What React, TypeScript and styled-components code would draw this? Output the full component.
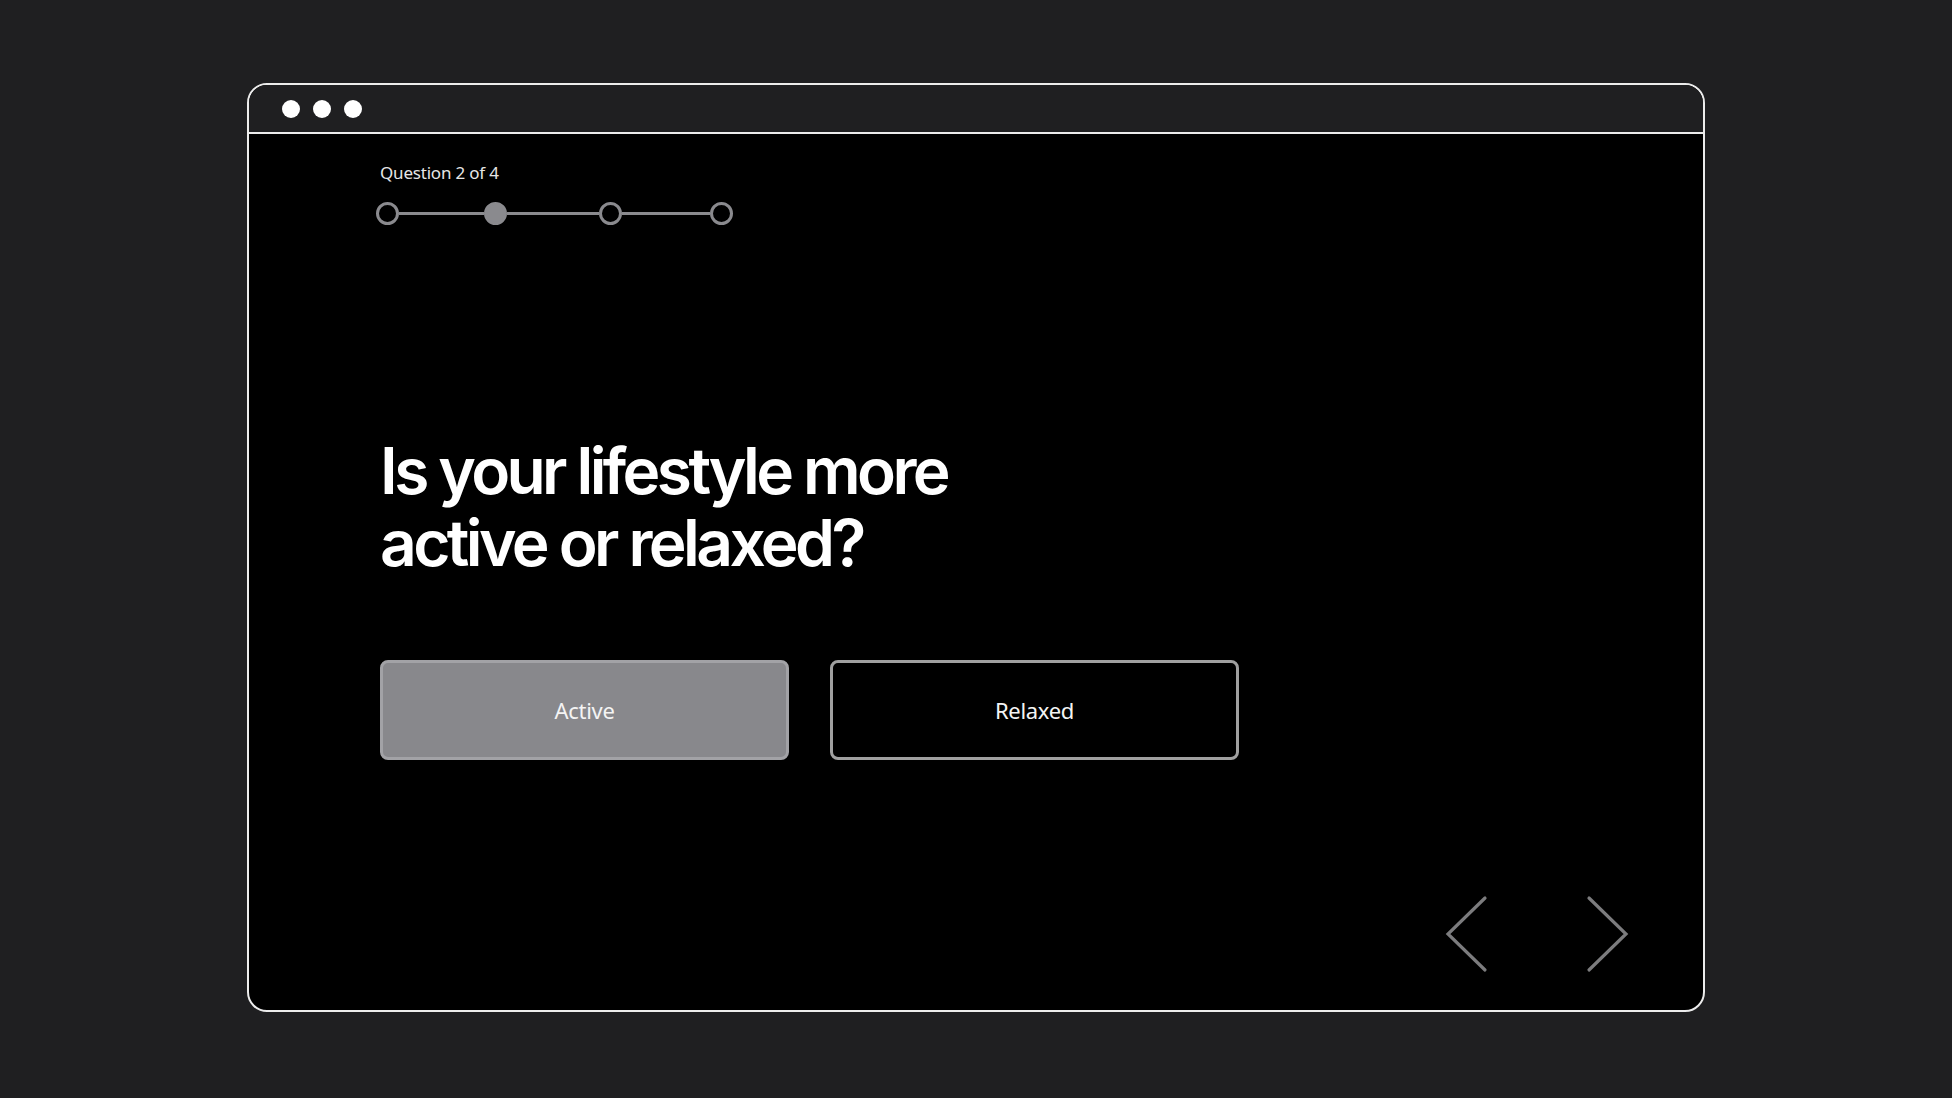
import styled, { createGlobalStyle } from 'styled-components';

const GlobalStyle = createGlobalStyle`
  html, body {
    margin: 0;
    padding: 0;
    background: #1f1f21;
  }
  body {
    font-family: 'Noto Sans', 'Open Sans', sans-serif;
  }
`;

// gaps between the step centres are not quite even in the mockup
const steps = [
  { done: false, gap: 0 },
  { done: true, gap: 85 },
  { done: false, gap: 92 },
  { done: false, gap: 88 },
];

const options = [
  { label: 'Active', selected: true },
  { label: 'Relaxed', selected: false },
];

const App = () => {
  return (
    <>
      <GlobalStyle />
      <Page>
        <Window>
          <TitleBar>
            <Dot />
            <Dot />
            <Dot />
          </TitleBar>
          <Content>
            <StepLabel>Question 2 of 4</StepLabel>
            <Stepper>
              {steps.map((s, i) => (
                <StepItem key={i}>
                  {i > 0 && <StepLine $width={s.gap} />}
                  <StepDot $done={s.done} />
                </StepItem>
              ))}
            </Stepper>
            <Heading>
              Is your lifestyle more
              <br />
              active or relaxed?
            </Heading>
            <Options>
              {options.map((o) => (
                <OptionButton key={o.label} $selected={o.selected}>
                  {o.label}
                </OptionButton>
              ))}
            </Options>
            <Nav>
              <NavButton aria-label="Previous">
                <svg width="45" height="80" viewBox="0 0 45 80" fill="none">
                  <polyline points="41,4 4,40 41,76" stroke="#7c7c7e" strokeWidth="3.2" strokeLinecap="round" strokeLinejoin="miter" />
                </svg>
              </NavButton>
              <NavButton aria-label="Next">
                <svg width="45" height="80" viewBox="0 0 45 80" fill="none">
                  <polyline points="4,4 41,40 4,76" stroke="#7c7c7e" strokeWidth="3.2" strokeLinecap="round" strokeLinejoin="miter" />
                </svg>
              </NavButton>
            </Nav>
          </Content>
        </Window>
      </Page>
    </>
  );
};

const Page = styled.div`
  width: 1952px;
  height: 1098px;
  padding-top: 83px;
  box-sizing: border-box;
  display: flex;
  justify-content: center;
  align-items: flex-start;
`;

const Window = styled.div`
  width: 1458px;
  height: 929px;
  box-sizing: border-box;
  border: 2px solid #ececec;
  border-radius: 20px;
  overflow: hidden;
  display: flex;
  flex-direction: column;
  background: #000;
`;

const TitleBar = styled.div`
  height: 47px;
  flex-shrink: 0;
  background: #1f1f21;
  border-bottom: 2px solid #ececec;
  display: flex;
  align-items: center;
  gap: 13px;
  padding-left: 33px;
`;

const Dot = styled.span`
  width: 18px;
  height: 18px;
  border-radius: 50%;
  background: #fff;
`;

const Content = styled.div`
  flex: 1;
  display: flex;
  flex-direction: column;
  align-items: flex-start;
  padding: 28px 73px 36px 131px;
`;

const StepLabel = styled.div`
  font-size: 17px;
  line-height: 22px;
  letter-spacing: -0.2px;
  color: #e6e6e6;
`;

const Stepper = styled.div`
  display: flex;
  align-items: center;
  margin-top: 18px;
  margin-left: -4px;
`;

const StepItem = styled.div`
  display: flex;
  align-items: center;
`;

const StepLine = styled.div<{ $width: number }>`
  width: ${(p) => p.$width}px;
  height: 3px;
  background: #8a8a8e;
`;

const StepDot = styled.div<{ $done: boolean }>`
  width: 23px;
  height: 23px;
  box-sizing: border-box;
  border-radius: 50%;
  border: 3.5px solid #8a8a8e;
  background: ${(p) => (p.$done ? '#8a8a8e' : 'transparent')};
`;

const Heading = styled.h1`
  margin: 210px 0 0;
  font-family: Inter, 'Noto Sans', sans-serif;
  font-weight: 600;
  font-size: 64px;
  line-height: 72px;
  letter-spacing: -0.056em;
  color: #fff;
`;

const Options = styled.div`
  display: flex;
  gap: 41px;
  margin-top: 81px;
`;

const OptionButton = styled.button<{ $selected: boolean }>`
  width: 409px;
  height: 100px;
  box-sizing: border-box;
  border-radius: 8px;
  border: 3px solid ${(p) => (p.$selected ? '#a2a2a6' : '#a0a0a0')};
  background: ${(p) => (p.$selected ? '#88888c' : '#000')};
  color: #f4f4f4;
  font-family: 'Noto Sans', sans-serif;
  font-size: 22px;
  letter-spacing: -0.3px;
  cursor: pointer;
`;

const Nav = styled.div`
  margin-top: auto;
  align-self: flex-end;
  display: flex;
  gap: 96px;
`;

const NavButton = styled.button`
  padding: 0;
  border: none;
  background: none;
  display: flex;
  cursor: pointer;
`;

export default App;
